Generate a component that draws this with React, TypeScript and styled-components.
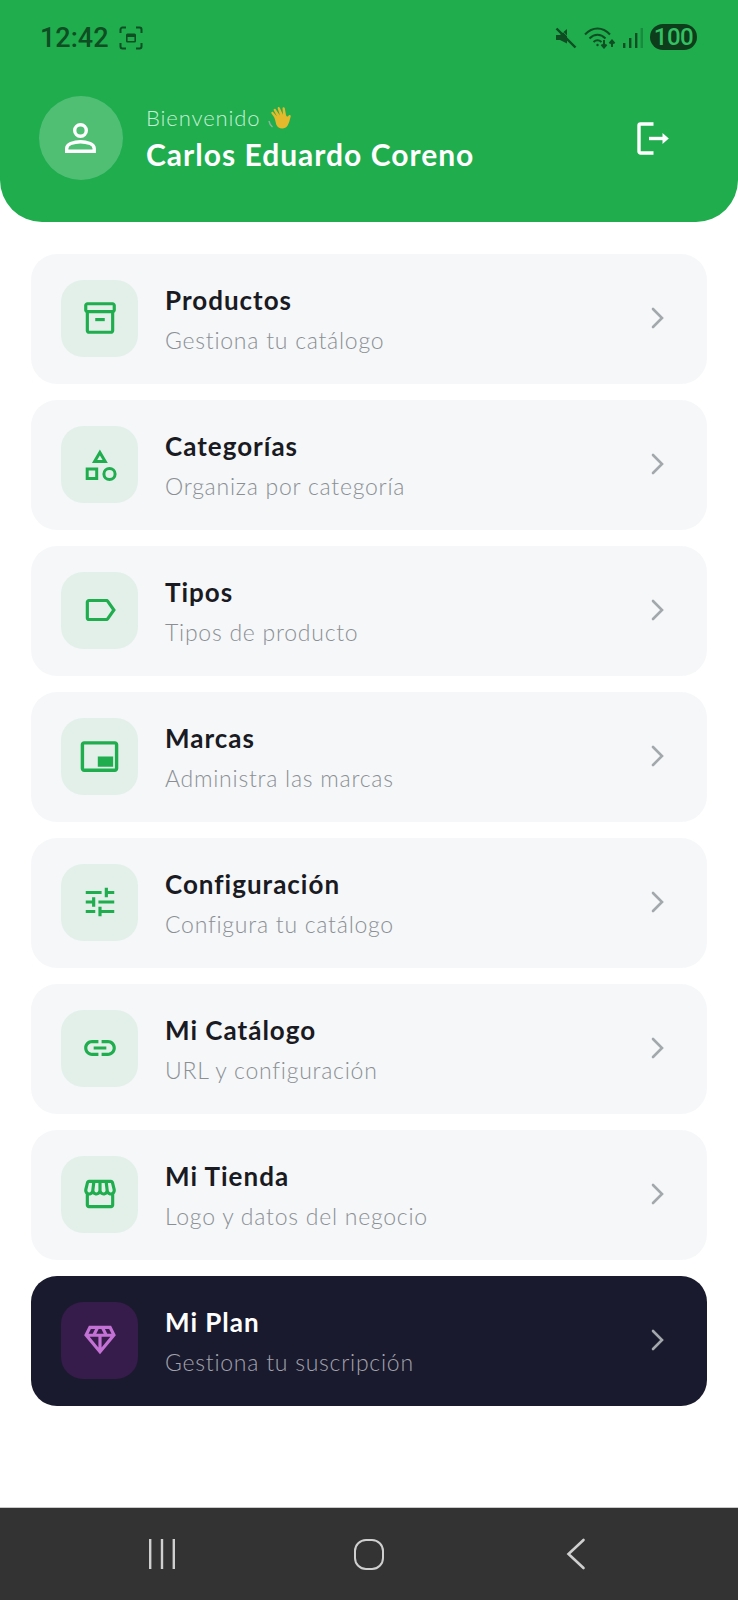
import { ReactNode } from "react";
import styled, { createGlobalStyle } from "styled-components";
import {
  MdOutlineBrandingWatermark,
  MdOutlineDiamond,
  MdOutlineInventory2,
  MdOutlineLabel,
  MdOutlineLink,
  MdOutlineStorefront,
  MdOutlineTune,
} from "react-icons/md";

const GlobalStyle = createGlobalStyle`
  html, body {
    margin: 0;
    padding: 0;
    background: #fff;
  }
  * {
    box-sizing: border-box;
  }
`;

const ShapesIcon = () => (
  <svg width="38" height="38" viewBox="0 0 38 38" fill="none" stroke="currentColor" strokeWidth="3">
    <path d="M18.900 7.500 24.200 16.500H13.600Z" />
    <rect x="6.200" y="24" width="9.500" height="9.500" />
    <circle cx="28.500" cy="29" r="5.600" />
  </svg>
);

const items: { title: string; sub: string; icon: ReactNode; dark?: boolean }[] = [
  { title: "Productos", sub: "Gestiona tu catálogo", icon: <MdOutlineInventory2 size={38} /> },
  { title: "Categorías", sub: "Organiza por categoría", icon: <ShapesIcon /> },
  { title: "Tipos", sub: "Tipos de producto", icon: <MdOutlineLabel size={38} /> },
  { title: "Marcas", sub: "Administra las marcas", icon: <MdOutlineBrandingWatermark size={41} /> },
  { title: "Configuración", sub: "Configura tu catálogo", icon: <MdOutlineTune size={38} /> },
  { title: "Mi Catálogo", sub: "URL y configuración", icon: <MdOutlineLink size={38} /> },
  { title: "Mi Tienda", sub: "Logo y datos del negocio", icon: <MdOutlineStorefront size={38} /> },
  { title: "Mi Plan", sub: "Gestiona tu suscripción", icon: <MdOutlineDiamond size={38} />, dark: true },
];

const App = () => {
  return (
    <Page>
      <GlobalStyle />
      <Header>
        <StatusBar>
          <StatusGroup>
            <Clock>12:42</Clock>
            <svg width="24" height="24" viewBox="0 0 24 24" fill="none" stroke="#0f4d22" strokeWidth="2">
              <path d="M1.500 7V3.500a2 2 0 0 1 2-2H7M17 1.500h3.500a2 2 0 0 1 2 2V7M22.500 17v3.500a2 2 0 0 1-2 2H17M7 22.500H3.500a2 2 0 0 1-2-2V17" />
              <rect x="7" y="7.500" width="10" height="9" rx="1.500" fill="#0f4d22" stroke="none" />
              <rect x="8.600" y="11" width="6.800" height="4" fill="#1fad4e" stroke="none" />
            </svg>
          </StatusGroup>
          <StatusIcons>
            <svg width="22" height="22" viewBox="0 0 22 22" fill="#0f4d22">
              <path d="M1 8h4l7-6v14.500L5 13H1Z" />
              <path d="M1.500 1.500 20.500 20.500" stroke="#0f4d22" strokeWidth="2.400" />
              <path d="M1.500 1.500 20.500 20.500" stroke="#1fad4e" strokeWidth="0.800" transform="translate(1.600 -1.600)" />
            </svg>
            <svg width="32" height="22" viewBox="0 0 32 22" fill="none" stroke="#0f4d22" strokeWidth="2">
              <path d="M1 7.500C8.500 -0.500 18.500 -0.500 26 7.500" />
              <path d="M5.500 11.500C10.500 6.500 16.500 6.500 21.500 11.500" />
              <path d="M9.500 15C12 12.800 15 12.800 17.500 15" />
              <circle cx="13.500" cy="18" r="1.200" fill="#0f4d22" stroke="none" />
              <path d="M20 13v7M17.500 17.500 20 20.500 22.500 17.500" />
              <path d="M28 20v-6M25.500 16.500 28 13.500 30.500 16.500" />
            </svg>
            <svg width="20" height="22" viewBox="0 0 20 22">
              <rect x="0" y="16" width="2.400" height="5" fill="#0f4d22" />
              <rect x="6" y="11" width="2.400" height="10" fill="#0f4d22" />
              <rect x="12" y="6" width="2.400" height="15" fill="#0f4d22" />
              <rect x="17.600" y="1" width="2.400" height="20" fill="#0f4d22" opacity="0.35" />
            </svg>
            <Battery>100</Battery>
          </StatusIcons>
        </StatusBar>
        <Profile>
          <Avatar>
            <svg width="38" height="38" viewBox="0 0 38 38" fill="none" stroke="#fff" strokeWidth="3.400">
              <circle cx="18.500" cy="11.500" r="5.800" />
              <path d="M4.700 32.300v-2.800c0-2.500 1.500-4 4-5 6.500-2.400 13-2.400 19.500 0 2.500 1 4 2.500 4 5v2.800Z" />
            </svg>
          </Avatar>
          <ProfileText>
            <Greeting>
              Bienvenido
              <svg width="25" height="25" viewBox="0 0 25 25">
                <path
                  d="M6 12 3.500 8.500c-.8-1.200.8-2.400 1.800-1.300L9 11.500 5.800 5.500c-.7-1.300 1-2.400 1.900-1.200L12 10.500 9.700 3.500c-.5-1.400 1.500-2 2.100-.7L15 9.800l-.5-6.300c-.1-1.500 2-1.600 2.300-.2L18 10c.6 1.700 1.900 2.200 2.600.6.500-1.300 2.600-.7 2.100.9-1 3.500-1.500 6.500-3.200 9.200-2.200 3.300-6.500 3.300-9.300 1.500C7.500 20.200 8 16 6 12Z"
                  fill="#e5b92c"
                />
                <path d="M1 16c.4 2.500 1.500 4.500 3.500 6" fill="none" stroke="#8fb4a0" strokeWidth="1.500" />
              </svg>
            </Greeting>
            <UserName>Carlos Eduardo Coreno</UserName>
          </ProfileText>
          <LogoutButton aria-label="Cerrar sesión">
            <svg width="32" height="33" viewBox="0 0 32 33" fill="none" stroke="#fff" strokeWidth="3.400">
              <path d="M16.500 2H3.500a1.500 1.500 0 0 0-1.500 1.500v26a1.500 1.500 0 0 0 1.500 1.500H16.500" />
              <path d="M12 16.500h15" />
              <path d="M25.500 11l6.300 5.500-6.300 5.500Z" fill="#fff" stroke="none" />
            </svg>
          </LogoutButton>
        </Profile>
      </Header>

      <Menu>
        {items.map((item) => (
          <Card key={item.title} $dark={item.dark}>
            <IconBox $dark={item.dark}>{item.icon}</IconBox>
            <CardText>
              <CardTitle $dark={item.dark}>{item.title}</CardTitle>
              <CardSub $dark={item.dark}>{item.sub}</CardSub>
            </CardText>
            <svg width="15" height="24" viewBox="0 0 15 24" fill="none" stroke="#a3a8ad" strokeWidth="2.600" strokeLinecap="round">
              <path d="M3 3 12 12 3 21" />
            </svg>
          </Card>
        ))}
      </Menu>

      <NavBar>
        <svg width="26" height="30" viewBox="0 0 26 30" stroke="#cfcfcf" strokeWidth="2.400">
          <path d="M1.200 0v30M13 0v30M24.800 0v30" />
        </svg>
        <HomeButton />
        <svg width="24" height="32" viewBox="0 0 24 32" fill="none" stroke="#cfcfcf" strokeWidth="2.600" strokeLinecap="round">
          <path d="M21.500 2 6.500 16 21.500 30" />
        </svg>
      </NavBar>
    </Page>
  );
};

export default App;

const Page = styled.div`
  display: flex;
  flex-direction: column;
  width: 738px;
  height: 1600px;
  overflow: hidden;
  background: #fff;
  font-family: "Lato", "Noto Sans", sans-serif;
`;

const Header = styled.header`
  height: 222px;
  background: #1fad4e;
  border-radius: 0 0 42px 42px;
`;

const StatusBar = styled.div`
  display: flex;
  align-items: center;
  justify-content: space-between;
  height: 76px;
  padding: 0 41px 0 40px;
`;

const StatusGroup = styled.div`
  display: flex;
  align-items: center;
  gap: 10px;
`;

const Clock = styled.span`
  font-family: "Roboto", sans-serif;
  font-size: 27px;
  font-weight: 500;
  color: #0f4d22;
`;

const StatusIcons = styled.div`
  display: flex;
  align-items: center;
  gap: 7px;
`;

const Battery = styled.span`
  display: flex;
  align-items: center;
  justify-content: center;
  width: 47px;
  height: 26px;
  margin-top: -3px;
  border-radius: 13px;
  background: #0d3d1b;
  color: #35c063;
  font-family: "Roboto", sans-serif;
  font-size: 24px;
  font-weight: 500;
  letter-spacing: -0.5px;
`;

const Profile = styled.div`
  display: flex;
  align-items: center;
  height: 84px;
  margin-top: 20px;
  padding: 0 69px 0 39px;
`;

const Avatar = styled.div`
  display: flex;
  align-items: center;
  justify-content: center;
  flex: none;
  width: 84px;
  height: 84px;
  border-radius: 50%;
  background: rgba(255, 255, 255, 0.22);
`;

const ProfileText = styled.div`
  flex: 1;
  margin-left: 23px;
`;

const Greeting = styled.div`
  display: flex;
  align-items: center;
  gap: 7px;
  height: 26px;
  margin-bottom: 6px;
  color: #c8efd5;
  font-size: 22px;
  font-weight: 300;
  letter-spacing: 0.9px;
`;

const UserName = styled.div`
  color: #fff;
  font-size: 30px;
  font-weight: 700;
  line-height: 36px;
  letter-spacing: 1px;
`;

const LogoutButton = styled.div`
  display: flex;
  line-height: 0;
`;

const Menu = styled.main`
  display: flex;
  flex-direction: column;
  gap: 16px;
  padding: 32px 31px 0;
`;

const Card = styled.div<{ $dark?: boolean }>`
  display: flex;
  align-items: center;
  height: 130px;
  padding: 0 42px 2px 30px;
  border-radius: 26px;
  background: ${(p) => (p.$dark ? "#1a1a2e" : "#f5f7f9")};
`;

const IconBox = styled.div<{ $dark?: boolean }>`
  display: flex;
  align-items: center;
  justify-content: center;
  flex: none;
  width: 77px;
  height: 77px;
  border-radius: 22px;
  background: ${(p) => (p.$dark ? "#361c4a" : "#e3f0e9")};
  color: ${(p) => (p.$dark ? "#c471d6" : "#1fad4e")};
`;

const CardText = styled.div`
  flex: 1;
  margin-left: 27px;
  padding-top: 2px;
`;

const CardTitle = styled.div<{ $dark?: boolean }>`
  color: ${(p) => (p.$dark ? "#fff" : "#1a1a22")};
  font-size: 26px;
  font-weight: 700;
  line-height: 32px;
  margin-bottom: 10px;
  letter-spacing: 1px;
`;

const CardSub = styled.div<{ $dark?: boolean }>`
  color: ${(p) => (p.$dark ? "#a3a3ad" : "#8b8f94")};
  font-size: 23px;
  font-weight: 300;
  line-height: 28px;
  letter-spacing: 0.75px;
`;

const NavBar = styled.nav`
  display: flex;
  align-items: center;
  justify-content: space-between;
  height: 93px;
  margin-top: auto;
  padding: 0 152px 0 149px;
  border-top: 1px solid #c9c9c9;
  background: #333;
`;

const HomeButton = styled.div`
  width: 30px;
  height: 31px;
  border: 2.5px solid #cfcfcf;
  border-radius: 12px;
`;
